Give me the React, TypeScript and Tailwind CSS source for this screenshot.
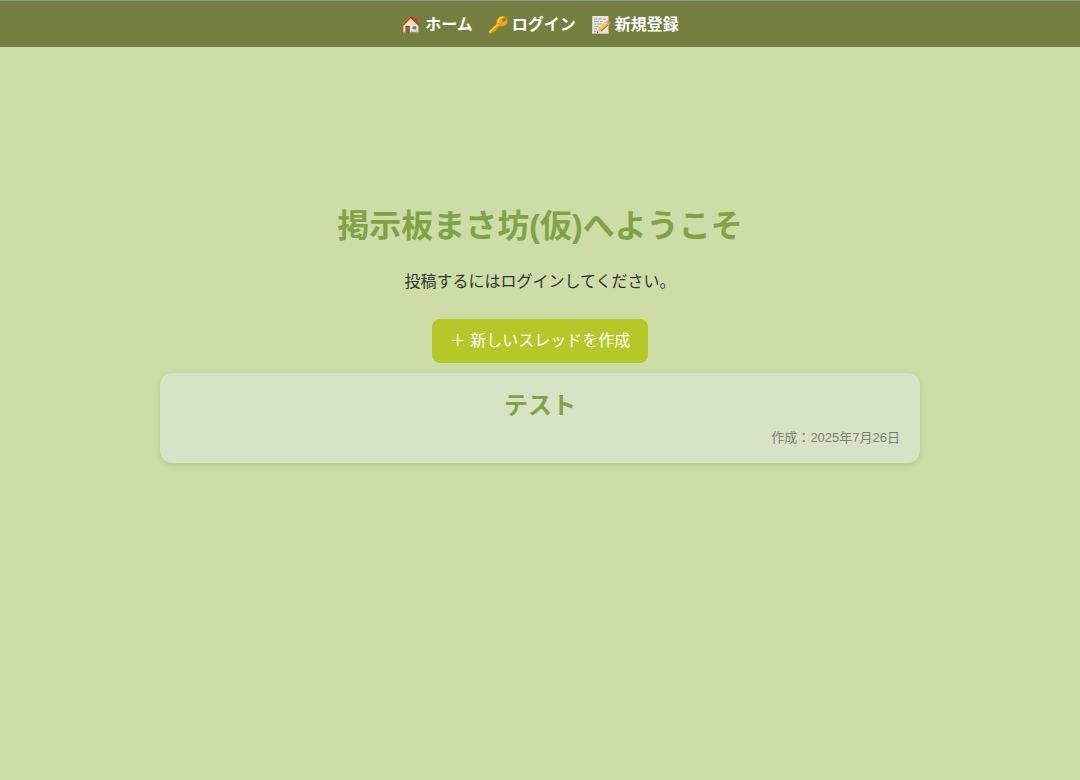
import type { ReactNode } from 'react';

interface Thread {
  id: number;
  title: string;
  createdAt: string;
}

const threads: Thread[] = [{ id: 1, title: 'テスト', createdAt: '2025年7月26日' }];

const HouseIcon = () => (
  <svg viewBox="0 0 20 20" className="h-5 w-5 shrink-0" aria-hidden="true">
    <path d="M14 2.2h2.4v5H14z" fill="#a5523c" />
    <path d="M2.6 9.5 9.5 2l8 7.5v9H2.6z" fill="#ead9b4" />
    <path d="M2.6 9.5 6.5 5l3 4.500v9.500H2.600z" fill="#f3e6c8" />
    <path d="M1.200 9.600 8.700 1.200h1.800l8.300 8.600-1.200 1.200L9.700 3.300 2.400 11z" fill="#a9432f" />
    <path d="M1.600 9.300 9 1.300" stroke="#d98a6c" strokeWidth=".7" />
    <path d="M4.500 10.800h4.200v7.900H4.500z" fill="#76432a" />
    <path d="M5.400 11.700h2.400v6.500H5.400z" fill="#96603c" />
    <path d="M10.700 10.500h5.400v4.700h-5.400z" fill="#fff" />
    <path d="M11.400 11.200h4v3.300h-4z" fill="#5582a8" />
    <path d="M2 18.100h16v1.200H2z" fill="#75803d" />
    <path d="M2.300 16.700h2v1.800h-2zM9.300 16.700h8.400v1.800H9.300z" fill="#8a9151" />
  </svg>
);

const KeyIcon = () => (
  <svg viewBox="0 0 20 20" className="h-5 w-5 shrink-0" aria-hidden="true">
    <path
      fillRule="evenodd"
      fill="#e3a823"
      stroke="#a97512"
      strokeWidth=".5"
      d="M10.200 3c2-2.400 5.700-2.700 8-.6 2 2 1.900 5.400-.1 7.500-1.700 1.800-4.200 2.300-6.300 1.400l-1.900 1.800.2 1.200-1.500.2-.2 1.300-1.500.2-.3 1.300-1.700.200-1.100 1.200-2.700.1-.5-.6.2-2.200 7.600-7.300C7.600 6.800 8.700 4.700 10.200 3zM15.100 3.600c-.8.800-.8 1.800-.2 2.400s1.600.5 2.300-.2.800-1.700.2-2.300-1.600-.6-2.300.1z"
    />
    <path d="M10 7.500c.2-3 2.200-5.200 4.900-5.500M1.800 17l7.700-7.300" fill="none" stroke="#f8d358" strokeWidth="1.100" strokeLinecap="round" />
    <path d="m3 18 7.300-6.700" fill="none" stroke="#bd8115" strokeWidth=".6" />
  </svg>
);

const MemoIcon = () => (
  <svg viewBox="0 0 20 20" className="h-5 w-5 shrink-0" aria-hidden="true">
    <path d="M1.200 1h16.300v18H1.200z" fill="#e6e6e1" />
    <path d="M1.200 18.200h16.300v.8H1.200z" fill="#b6b8ac" />
    <path
      d="M3 4h3m1 0h4m1 0h3M3 6.500h5m1 0h3M3 9h2m1 0h5M3 11.500h5M3 14h3M3 16.500h2"
      fill="none"
      stroke="#9b9c98"
      strokeWidth=".8"
    />
    <path d="m7.400 13.100 8-6.700 2.800 3.200-8 6.900-4.300 1.400z" fill="#efb22e" />
    <path d="m8 13.300 8-6.700 1 1-8 6.900z" fill="#ffd75e" />
    <path d="m9.500 15.700 8-6.900.700.800-8 6.900z" fill="#bf781c" />
    <path d="m7.400 13.100 2.800 3.400-4.300 1.400z" fill="#e9c899" />
    <path d="m6.400 16.300 1 1.100-1.700.600z" fill="#333" />
    <path d="m14.500 7.200 1.100-.900 2.800 3.200-1.100.900z" fill="#b8bdc0" />
    <path d="m15.600 6.300 1-.8c1-.700 3.600 2.100 2.800 3.100l-1 .9z" fill="#dc8272" />
  </svg>
);

const NavLink = ({ href, icon, children }: { href: string; icon: ReactNode; children: ReactNode }) => (
  <a href={href} className="flex items-center gap-1 font-bold text-white hover:underline">
    {icon}
    <span>{children}</span>
  </a>
);

const ThreadCard = ({ thread }: { thread: Thread }) => (
  <li className="rounded-xl bg-[#d6e3c5] px-5 pt-[17px] pb-[15px] shadow-[0_2px_6px_rgba(0,0,0,0.1)]">
    <h2 className="text-center text-2xl leading-8 font-bold text-[#80a345]">
      <a href={`/threads/${thread.id}`}>{thread.title}</a>
    </h2>
    <p className="mt-1.5 text-right text-[13px] leading-5 text-[#7c7f79]">作成：{thread.createdAt}</p>
  </li>
);

export default function App() {
  return (
    <div className="min-h-screen bg-[#ccdda7] font-['Liberation_Sans','Noto_Sans_CJK_JP',sans-serif] text-base text-[#333]">
      <header className="border-t border-[#7d9aa3] bg-[#747e3f] px-4 pt-3 pb-2.5">
        <nav className="flex flex-wrap justify-center gap-x-[15px]">
          <NavLink href="/" icon={<HouseIcon />}>ホーム</NavLink>
          <NavLink href="/login" icon={<KeyIcon />}>ログイン</NavLink>
          <NavLink href="/register" icon={<MemoIcon />}>新規登録</NavLink>
        </nav>
      </header>

      <main className="mx-auto flex max-w-[800px] flex-col items-center px-5 pt-[155px] pb-10">
        <h1 className="text-center text-[32px] leading-12 font-bold text-[#80a345]">掲示板まさ坊(仮)へようこそ</h1>
        <p className="mt-5 text-center">投稿するにはログインしてください。</p>
        <button type="button" className="mt-[25px] cursor-pointer rounded-lg bg-[#b5c827] px-[18px] py-2.5 text-white hover:bg-[#a5b720]">
          ＋ 新しいスレッドを作成
        </button>
        <ul className="mt-2.5 flex w-full flex-col gap-2.5">
          {threads.map((thread) => (
            <ThreadCard key={thread.id} thread={thread} />
          ))}
        </ul>
      </main>
    </div>
  );
}
